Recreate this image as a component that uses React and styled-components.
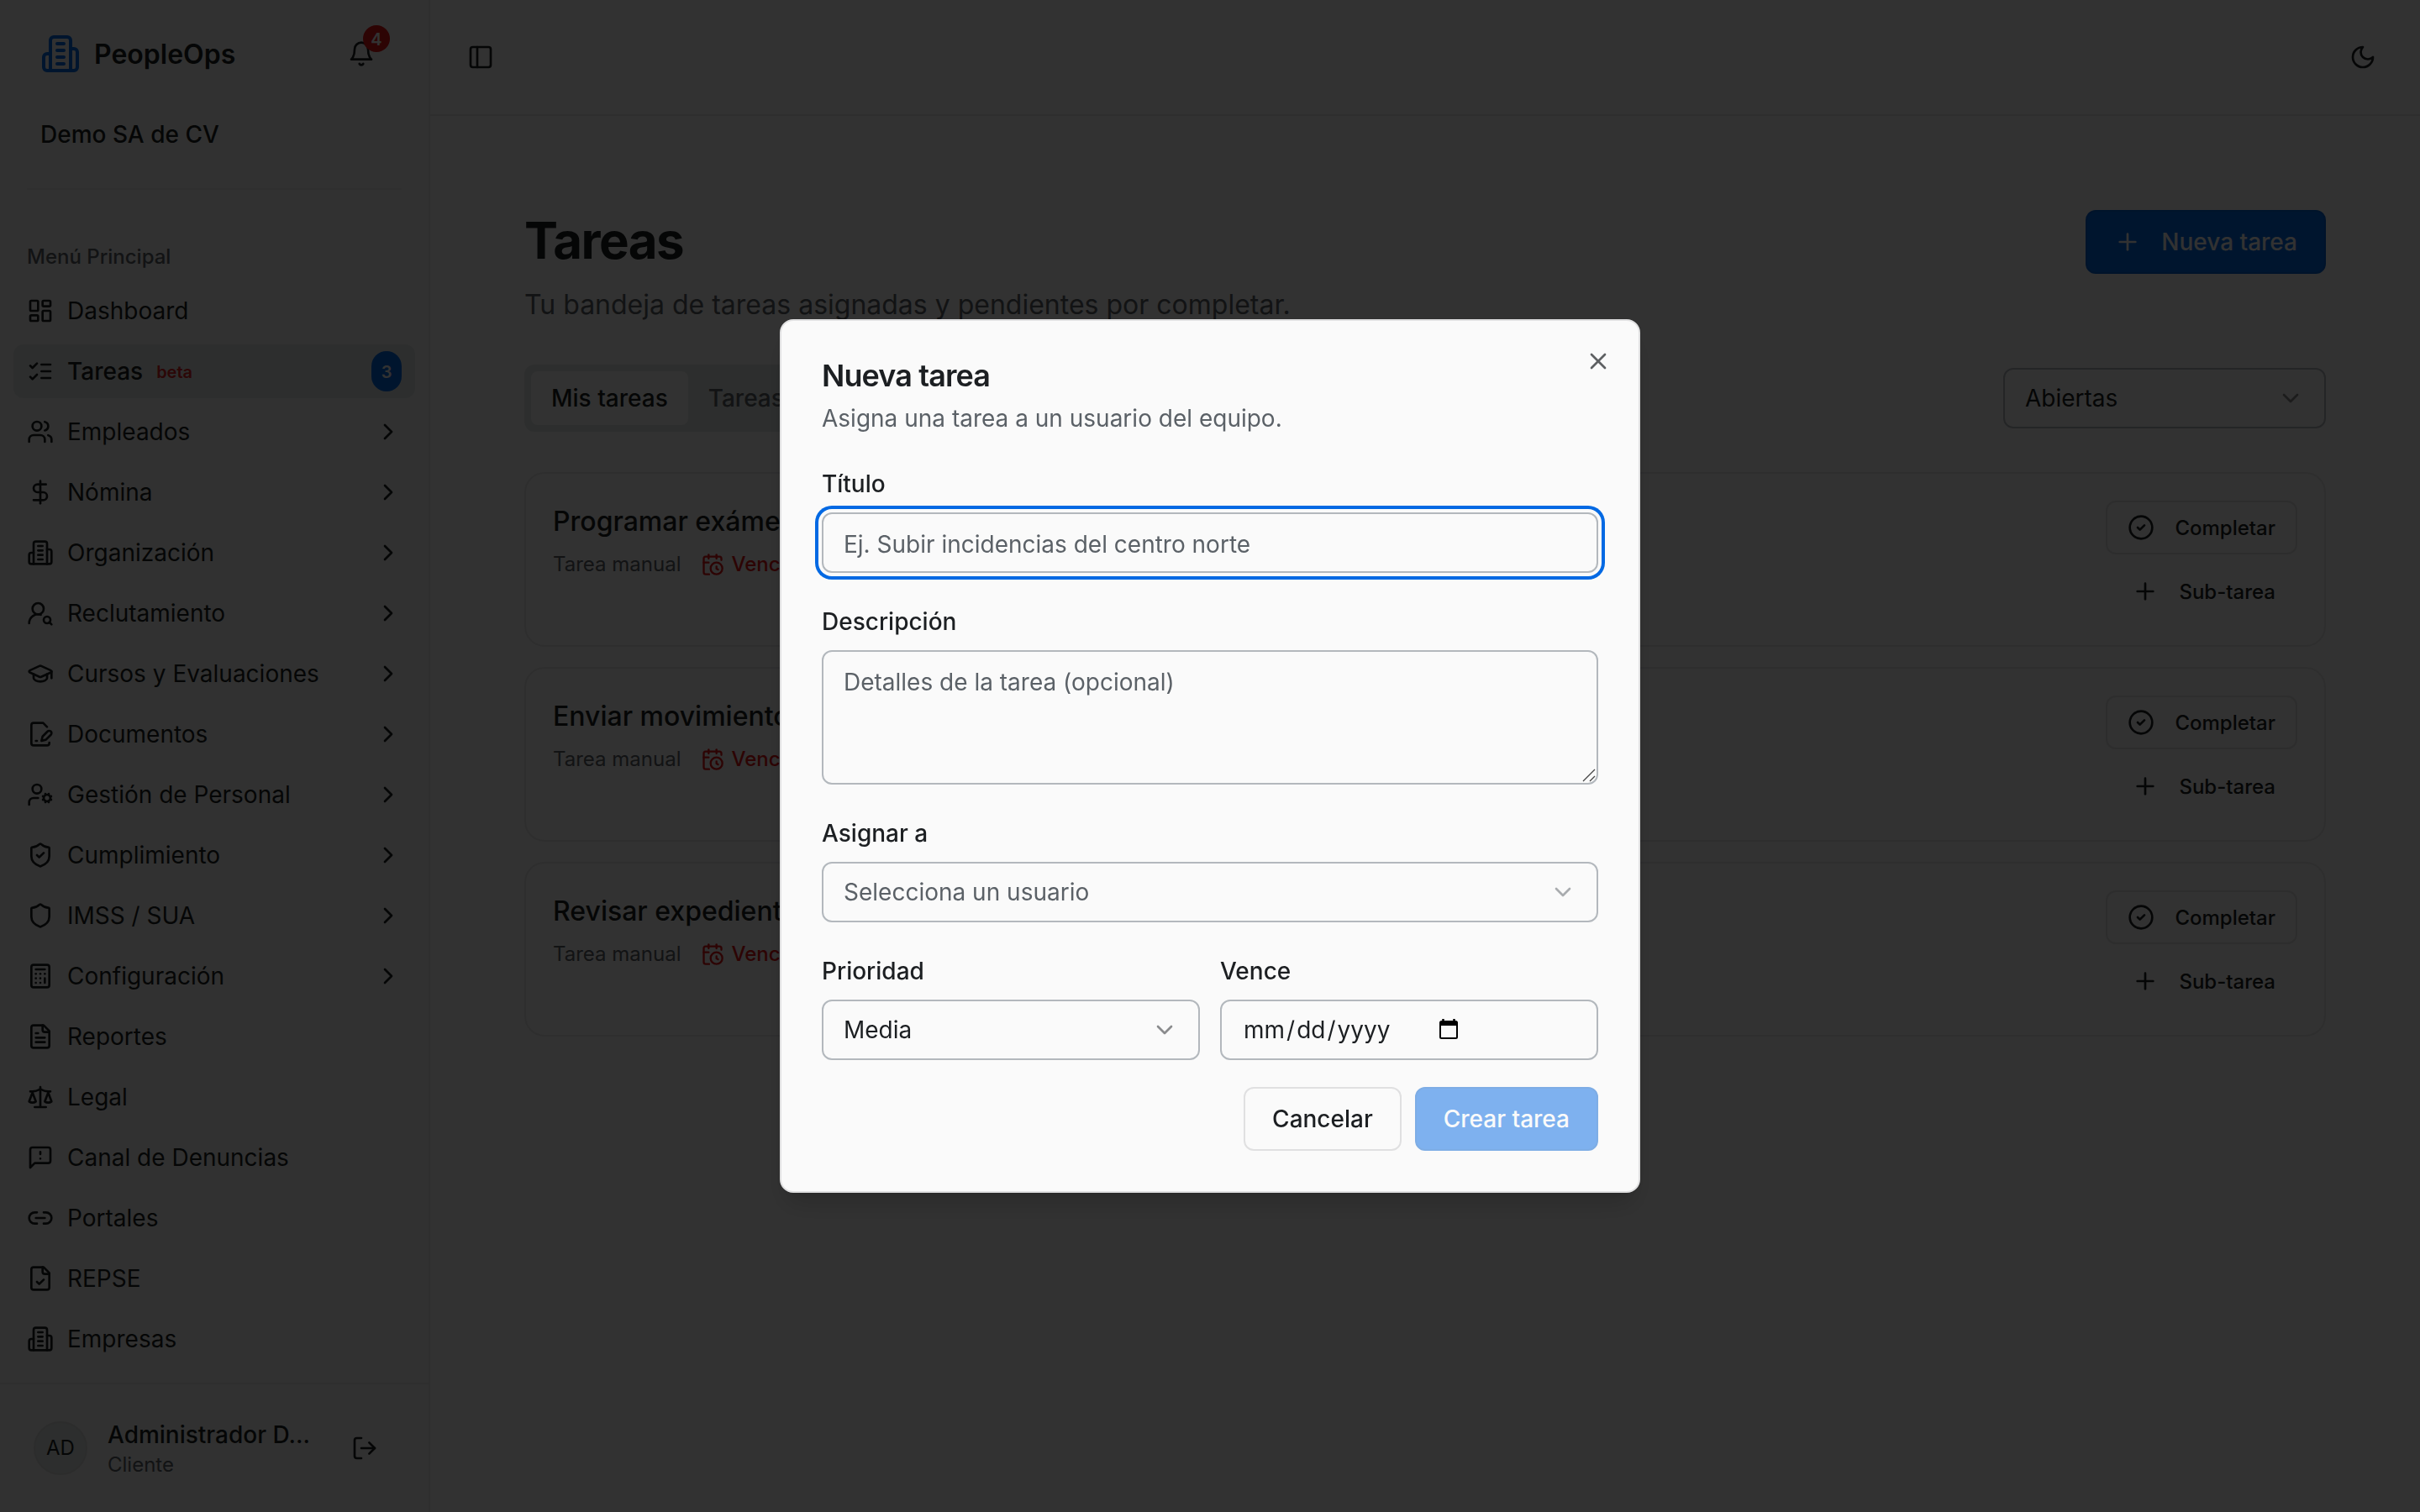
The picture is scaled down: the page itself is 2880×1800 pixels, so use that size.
import React from 'react';
import styled, { createGlobalStyle } from 'styled-components';
import {
    Calculator, CalendarClock, ChevronDown, ChevronRight, CircleCheck, DollarSign, GraduationCap,
    LayoutDashboard, Link2, LogOut, PanelLeft, Plus, Shield, ShieldCheck, UserCog,
    UserRoundSearch, X
} from 'lucide-react';

const GlobalStyle = createGlobalStyle`
    * {
        box-sizing: border-box;
    }

    body {
        margin: 0;
        background: #fafafa;
        color: #1c1f22;
        font-family: Inter, "Liberation Sans", sans-serif;
        font-size: 28px;
        line-height: 40px;
        overflow: hidden;
    }

    button, input, textarea {
        font-family: inherit;
        color: inherit;
    }

    svg {
        flex-shrink: 0;
    }
`

const Svg = styled.svg`
    width: ${props => props.$size || 32}px;
    height: ${props => props.$size || 32}px;
    fill: none;
    stroke: currentColor;
    stroke-width: 2;
    stroke-linecap: round;
    stroke-linejoin: round;
`

const Building = ({ size }) => (
    <Svg viewBox="0 0 24 24" $size={size}>
        <path d="M6 22V4a2 2 0 0 1 2-2h8a2 2 0 0 1 2 2v18Z" />
        <path d="M6 12H4a2 2 0 0 0-2 2v6a2 2 0 0 0 2 2h2" />
        <path d="M18 9h2a2 2 0 0 1 2 2v9a2 2 0 0 1-2 2h-2" />
        <path d="M10 6h4M10 10h4M10 14h4M10 18h4" />
    </Svg>
)

const Bell = () => (
    <Svg viewBox="0 0 24 24">
        <path d="M6 8a6 6 0 0 1 12 0c0 7 3 9 3 9H3s3-2 3-9" />
        <path d="M10.3 21a1.94 1.94 0 0 0 3.4 0" />
    </Svg>
)

const Moon = () => (
    <Svg viewBox="0 0 24 24">
        <path d="M12 3a6 6 0 0 0 9 9 9 9 0 1 1-9-9Z" />
    </Svg>
)

const Checks = () => (
    <Svg viewBox="0 0 24 24">
        <path d="m3 17 2 2 4-4M3 7l2 2 4-4" />
        <path d="M13 6h8M13 12h8M13 18h8" />
    </Svg>
)

const People = () => (
    <Svg viewBox="0 0 24 24">
        <path d="M16 21v-2a4 4 0 0 0-4-4H6a4 4 0 0 0-4 4v2" />
        <circle cx="9" cy="7" r="4" />
        <path d="M22 21v-2a4 4 0 0 0-3-3.87" />
        <path d="M16 3.13a4 4 0 0 1 0 7.75" />
    </Svg>
)

const FileSign = () => (
    <Svg viewBox="0 0 24 24">
        <path d="M20 19.5v.5a2 2 0 0 1-2 2H6a2 2 0 0 1-2-2V4a2 2 0 0 1 2-2h8.5L18 5.5" />
        <path d="M8 18h1" />
        <path d="M18.42 9.61a2.1 2.1 0 1 1 2.97 2.97L16.95 17 13 18l.99-3.95 4.43-4.44Z" />
    </Svg>
)

const File = ({ children }) => (
    <Svg viewBox="0 0 24 24">
        <path d="M15 2H6a2 2 0 0 0-2 2v16a2 2 0 0 0 2 2h12a2 2 0 0 0 2-2V7Z" />
        <path d="M14 2v4a2 2 0 0 0 2 2h4" />
        {children}
    </Svg>
)

const Balance = () => (
    <Svg viewBox="0 0 24 24">
        <path d="m16 16 3-8 3 8c-.87.65-1.92 1-3 1s-2.13-.35-3-1Z" />
        <path d="m2 16 3-8 3 8c-.87.65-1.92 1-3 1s-2.13-.35-3-1Z" />
        <path d="M7 21h10M12 3v18" />
        <path d="M3 7h2c2 0 5-1 7-2 2 1 5 2 7 2h2" />
    </Svg>
)

const MessageWarning = () => (
    <Svg viewBox="0 0 24 24">
        <path d="M21 15a2 2 0 0 1-2 2H7l-4 4V5a2 2 0 0 1 2-2h14a2 2 0 0 1 2 2z" />
        <path d="M12 7v2M12 13h.01" />
    </Svg>
)

const Shell = styled.div`
    display: flex;
    width: 2880px;
    height: 1800px;
`

const Sidebar = styled.aside`
    display: flex;
    flex-direction: column;
    width: 512px;
    background: #f4f4f4;
    border-right: 2px solid #e4e4e5;
`

const SideHead = styled.div`
    height: 226px;
    margin: 0 32px;
    padding: 32px 16px 0;
    border-bottom: 2px solid #e9e9ea;
`

const BrandRow = styled.div`
    display: flex;
    align-items: center;
    height: 64px;
`

const Brand = styled.div`
    display: flex;
    flex: 1;
    align-items: center;
    gap: 16px;
    color: #0369e3;
`

const BrandName = styled.span`
    padding-top: 2px;
    color: #1c1f22;
    font-size: 32px;
    font-weight: 600;
`

const BellBox = styled.div`
    position: relative;
    display: flex;
    margin-right: 16px;
`

const BellCount = styled.span`
    position: absolute;
    top: -18px;
    right: -18px;
    width: 32px;
    height: 32px;
    border-radius: 50%;
    background: #e01414;
    color: #fafafa;
    font-size: 20px;
    font-weight: 600;
    line-height: 34px;
    text-align: center;
`

const Company = styled.div`
    margin-top: 44px;
    font-weight: 500;
`

const Menu = styled.nav`
    display: flex;
    flex: 1;
    flex-direction: column;
    gap: 8px;
    padding: 48px 16px 0;
`

const MenuTitle = styled.div`
    height: 64px;
    padding: 0 16px;
    color: #5b6167;
    font-size: 24px;
    font-weight: 500;
    line-height: 64px;
    margin-bottom: -8px;
`

const MenuItem = styled.a`
    display: flex;
    align-items: center;
    gap: 16px;
    height: 64px;
    padding: 0 16px;
    border-radius: 12px;
    background: ${props => props.$active ? '#dfe5e3' : 'transparent'};
    font-weight: ${props => props.$active ? 500 : 400};

    > svg:last-child {
        margin-left: auto;
    }
`

const Beta = styled.span`
    padding-top: 2px;
    color: #dc2626;
    font-size: 20px;
    font-weight: 600;
`

const Count = styled.span`
    width: 36px;
    height: 48px;
    margin-left: auto;
    border-radius: 18px;
    background: #0369e3;
    color: #fafafa;
    font-size: 20px;
    font-weight: 600;
    line-height: 50px;
    text-align: center;
`

const UserBar = styled.div`
    display: flex;
    align-items: center;
    height: 154px;
    padding: 0 60px 0 40px;
    border-top: 2px solid #e4e4e5;
`

const Avatar = styled.div`
    width: 64px;
    height: 64px;
    border: 2px solid #dadddc;
    border-radius: 50%;
    background: #dfe5e3;
    font-size: 24px;
    line-height: 60px;
    text-align: center;
`

const UserInfo = styled.div`
    flex: 1;
    margin-left: 24px;
    padding-top: 2px;
    line-height: 36px;
`

const UserName = styled.div`
    font-weight: 500;
`

const UserRole = styled.div`
    color: #5b6167;
    font-size: 24px;
    line-height: 35px;
`

const Main = styled.main`
    flex: 1;
`

const TopBar = styled.header`
    display: flex;
    align-items: center;
    justify-content: space-between;
    height: 138px;
    padding: 0 52px 0 44px;
    border-bottom: 2px solid #e4e4e5;
`

const Page = styled.div`
    padding: 112px 112px 0;
`

const Between = styled.div`
    display: flex;
    align-items: flex-start;
    justify-content: space-between;
`

const Title = styled.h1`
    margin: 0;
    font-size: 60px;
    font-weight: 700;
    letter-spacing: -1.5px;
    line-height: 72px;
`

const Subtitle = styled.p`
    margin: 17px 0 0;
    color: #5b6167;
    font-size: 32px;
    line-height: 48px;
`

const Button = styled.button`
    display: flex;
    align-items: center;
    justify-content: center;
    gap: 24px;
    height: ${props => props.$small ? 64 : 76}px;
    padding: 0 ${props => props.$small ? 24 : 32}px;
    border: 2px solid ${props => props.$primary ? '#0361cf' : props.$ghost ? 'transparent' : '#e0e0e1'};
    border-radius: 12px;
    background: ${props => props.$primary ? '#0369e3' : 'transparent'};
    color: ${props => props.$primary ? '#fafafa' : '#1c1f22'};
    font-size: ${props => props.$small ? 24 : 28}px;
    font-weight: 500;
    opacity: ${props => props.disabled ? 0.5 : 1};
`

const Filters = styled(Between)`
    align-items: center;
    margin-top: 47px;
`

const Tabs = styled.div`
    display: flex;
    height: 80px;
    padding: 8px;
    border-radius: 12px;
    background: #dfe5e3;
`

const Tab = styled.div`
    padding: 0 24px;
    border-radius: 8px;
    background: ${props => props.$active ? '#fafafa' : 'transparent'};
    color: ${props => props.$active ? '#1c1f22' : '#5b6167'};
    font-weight: 500;
    line-height: 64px;
`

const Select = styled.div`
    display: flex;
    align-items: center;
    justify-content: space-between;
    width: ${props => props.$width || '100%'};
    height: 72px;
    padding: 0 24px;
    border: 2px solid #b3b8bd;
    border-radius: 12px;
    color: ${props => props.$empty ? '#5b6167' : '#1c1f22'};

    > svg {
        opacity: 0.5;
    }
`

const TaskList = styled.div`
    display: flex;
    flex-direction: column;
    gap: 24px;
    margin-top: 48px;
`

const Card = styled.div`
    display: flex;
    justify-content: space-between;
    height: 208px;
    padding: 32px;
    border: 2px solid #e6e6e7;
    border-radius: 24px;
    background: #f7f7f7;
`

const TaskName = styled.div`
    margin-top: 1px;
    font-size: 32px;
    font-weight: 500;
    line-height: 48px;
`

const TaskMeta = styled.div`
    display: flex;
    align-items: center;
    gap: 24px;
    margin-top: 11px;
    color: #5b6167;
    font-size: 24px;
    line-height: 32px;
`

const Due = styled.span`
    display: flex;
    align-items: center;
    gap: 8px;
    color: #e01414;
    font-weight: 500;
`

const Actions = styled.div`
    display: flex;
    flex-direction: column;
    align-items: flex-end;
    gap: 12px;
`

const Overlay = styled.div`
    position: fixed;
    inset: 0;
    display: flex;
    align-items: center;
    justify-content: center;
    background: rgba(0, 0, 0, 0.8);
`

const Dialog = styled.form`
    position: relative;
    display: flex;
    flex-direction: column;
    width: 1024px;
    height: 1040px;
    padding: 48px;
    border: 2px solid #e0e0e1;
    border-radius: 16px;
    background: #fafafa;
    box-shadow: 0 20px 30px -6px rgba(0, 0, 0, 0.15), 0 8px 12px -8px rgba(0, 0, 0, 0.15);
`

const Close = styled.span`
    position: absolute;
    top: 32px;
    right: 32px;
    display: flex;
    opacity: 0.7;
`

const DialogTitle = styled.h2`
    margin: -1px 0 0;
    font-size: 36px;
    font-weight: 600;
    letter-spacing: -0.9px;
    line-height: 36px;
`

const DialogText = styled.p`
    margin: 13px 0 0;
    color: #5b6167;
`

const Field = styled.div`
    display: flex;
    flex-direction: column;
    gap: 14px;
    margin-top: 38px;
`

const Label = styled.label`
    font-weight: 500;
    line-height: 40px;
`

const Input = styled.input`
    width: 100%;
    height: 72px;
    padding: 3px 24px 0;
    border: 2px solid #b3b8bd;
    border-radius: 12px;
    background: #fafafa;
    font-size: 28px;
    outline: none;

    &::placeholder {
        color: #5b6167;
    }

    &:focus {
        box-shadow: 0 0 0 4px #fafafa, 0 0 0 8px #0369e3;
    }
`

const TextArea = styled.textarea`
    display: block;
    width: 100%;
    height: 160px;
    padding: 16px 24px;
    border: 2px solid #b3b8bd;
    border-radius: 12px;
    background: #fafafa;
    font-size: 28px;
    line-height: 40px;
    resize: none;

    &::placeholder {
        color: #5b6167;
    }
`

const AreaBox = styled.div`
    position: relative;
`

const Grip = styled.svg`
    position: absolute;
    right: 3px;
    bottom: 3px;
    width: 16px;
    height: 16px;
    fill: none;
    stroke: #444;
    stroke-width: 1.3;
`

const DateInput = styled.div`
    display: flex;
    align-items: center;
    height: 72px;
    padding: 0 26px;
    border: 2px solid #b3b8bd;
    border-radius: 12px;

    > svg {
        margin: 0 0 2px 58px;
    }
`

const Slash = styled.span`
    margin: 0 2px;
`

const Columns = styled.div`
    display: grid;
    grid-template-columns: 1fr 1fr;
    gap: 24px;
`

const Footer = styled.div`
    display: flex;
    justify-content: flex-end;
    gap: 16px;
    margin-top: 32px;
`

const menu = [
    { label: 'Dashboard', icon: <LayoutDashboard size={32} /> },
    { label: 'Tareas', icon: <Checks />, active: true },
    { label: 'Empleados', icon: <People />, more: true },
    { label: 'Nómina', icon: <DollarSign size={32} />, more: true },
    { label: 'Organización', icon: <Building />, more: true },
    { label: 'Reclutamiento', icon: <UserRoundSearch size={32} />, more: true },
    { label: 'Cursos y Evaluaciones', icon: <GraduationCap size={32} />, more: true },
    { label: 'Documentos', icon: <FileSign />, more: true },
    { label: 'Gestión de Personal', icon: <UserCog size={32} />, more: true },
    { label: 'Cumplimiento', icon: <ShieldCheck size={32} />, more: true },
    { label: 'IMSS / SUA', icon: <Shield size={32} />, more: true },
    { label: 'Configuración', icon: <Calculator size={32} />, more: true },
    { label: 'Reportes', icon: <File><path d="M10 9H8M16 13H8M16 17H8" /></File> },
    { label: 'Legal', icon: <Balance /> },
    { label: 'Canal de Denuncias', icon: <MessageWarning /> },
    { label: 'Portales', icon: <Link2 size={32} /> },
    { label: 'REPSE', icon: <File><path d="m9 15 2 2 4-4" /></File> },
    { label: 'Empresas', icon: <Building /> }
]

const tasks = ['Programar exámenes', 'Enviar movimientos', 'Revisar expedientes']

const SideMenu = () => (
    <Sidebar>
        <SideHead>
            <BrandRow>
                <Brand>
                    <Building size={48} />
                    <BrandName>PeopleOps</BrandName>
                </Brand>
                <BellBox>
                    <Bell />
                    <BellCount>4</BellCount>
                </BellBox>
            </BrandRow>
            <Company>Demo SA de CV</Company>
        </SideHead>
        <Menu>
            <MenuTitle>Menú Principal</MenuTitle>
            {menu.map(item => (
                <MenuItem key={item.label} $active={item.active}>
                    {item.icon}
                    <span>{item.label}</span>
                    {item.active && <Beta>beta</Beta>}
                    {item.active && <Count>3</Count>}
                    {item.more && <ChevronRight size={32} />}
                </MenuItem>
            ))}
        </Menu>
        <UserBar>
            <Avatar>AD</Avatar>
            <UserInfo>
                <UserName>Administrador D…</UserName>
                <UserRole>Cliente</UserRole>
            </UserInfo>
            <LogOut size={32} />
        </UserBar>
    </Sidebar>
)

const Task = ({ name }) => (
    <Card>
        <div>
            <TaskName>{name}</TaskName>
            <TaskMeta>
                <span>Tarea manual</span>
                <Due><CalendarClock size={28} />Vencida</Due>
            </TaskMeta>
        </div>
        <Actions>
            <Button $small><CircleCheck size={32} />Completar</Button>
            <Button $small $ghost><Plus size={32} />Sub-tarea</Button>
        </Actions>
    </Card>
)

const NewTask = () => (
    <Dialog>
        <Close><X size={32} /></Close>
        <DialogTitle>Nueva tarea</DialogTitle>
        <DialogText>Asigna una tarea a un usuario del equipo.</DialogText>
        <Field>
            <Label>Título</Label>
            <Input autoFocus placeholder="Ej. Subir incidencias del centro norte" />
        </Field>
        <Field>
            <Label>Descripción</Label>
            <AreaBox>
                <TextArea placeholder="Detalles de la tarea (opcional)" />
                <Grip viewBox="0 0 16 16">
                    <path d="M1 15 15 1M9 15l6-6" />
                </Grip>
            </AreaBox>
        </Field>
        <Field>
            <Label>Asignar a</Label>
            <Select $empty>Selecciona un usuario<ChevronDown size={32} /></Select>
        </Field>
        <Columns>
            <Field>
                <Label>Prioridad</Label>
                <Select>Media<ChevronDown size={32} /></Select>
            </Field>
            <Field>
                <Label>Vence</Label>
                <DateInput>
                    <span>mm<Slash>/</Slash>dd<Slash>/</Slash>yyyy</span>
                    <svg width="22" height="24" viewBox="0 0 22 24">
                        <path d="M4.5 0v4M17.5 0v4" stroke="#000" strokeWidth="2.5" />
                        <rect x="1" y="3" width="20" height="20" rx="1.5" fill="none" stroke="#000" strokeWidth="2" />
                        <path d="M1 3h20v5H1z" fill="#000" />
                    </svg>
                </DateInput>
            </Field>
        </Columns>
        <Footer>
            <Button type="button">Cancelar</Button>
            <Button type="button" $primary disabled>Crear tarea</Button>
        </Footer>
    </Dialog>
)

const App = () => (
    <>
        <GlobalStyle />
        <Shell>
            <SideMenu />
            <Main>
                <TopBar>
                    <PanelLeft size={32} />
                    <Moon />
                </TopBar>
                <Page>
                    <Between>
                        <div>
                            <Title>Tareas</Title>
                            <Subtitle>Tu bandeja de tareas asignadas y pendientes por completar.</Subtitle>
                        </div>
                        <Button $primary><Plus size={32} />Nueva tarea</Button>
                    </Between>
                    <Filters>
                        <Tabs>
                            <Tab $active>Mis tareas</Tab>
                            <Tab>Tareas del equipo</Tab>
                        </Tabs>
                        <Select $width="384px">Abiertas<ChevronDown size={32} /></Select>
                    </Filters>
                    <TaskList>
                        {tasks.map(name => <Task key={name} name={name} />)}
                    </TaskList>
                </Page>
            </Main>
        </Shell>
        <Overlay>
            <NewTask />
        </Overlay>
    </>
)

export default App
